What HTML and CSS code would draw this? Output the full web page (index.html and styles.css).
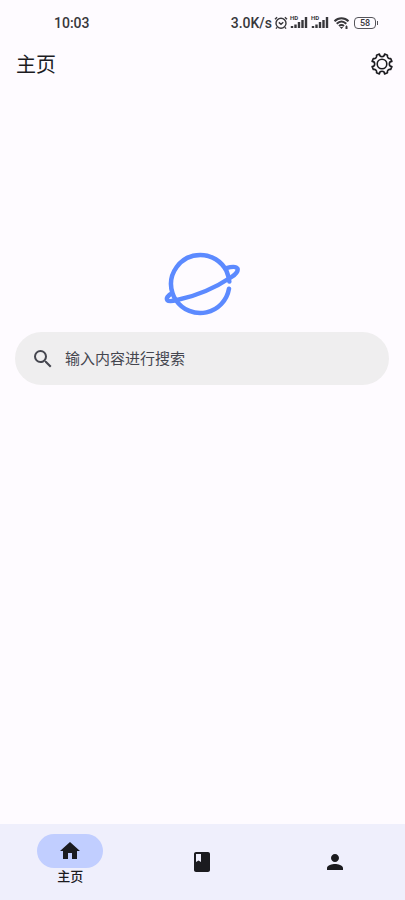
FILE: index.html
```html
<!DOCTYPE html>
<html lang="zh-CN">
<head>
<meta charset="utf-8">
<meta name="viewport" content="width=device-width, initial-scale=1">
<title>主页</title>
<link rel="stylesheet" href="styles.css">
</head>
<body>
<div class="status">
  <time class="clock">10:03</time>
  <div class="indicators">
    <span class="speed">3.0K/s</span>
    <svg class="alarm" width="14" height="14" viewBox="0 0 14 14"><circle cx="7" cy="7.3" r="5"/><path d="M4.800 6.400 7 8.300l2.300-2M1 3.200l2.100-2M13 3.200l-2.100-2M3 11.400l-1 1.200M11 11.400l1 1.200"/></svg>
    <span class="signal"><span class="hd">HD</span><svg width="18" height="13" viewBox="0 0 18 13"><path d="M2 12v-2M5.500 12V8.500M9 12V6M12.500 12V4M16 12V1"/></svg></span>
    <span class="signal"><span class="hd">HD</span><svg width="18" height="13" viewBox="0 0 18 13"><path d="M2 12v-2M5.500 12V8.500M9 12V6M12.500 12V4M16 12V1"/></svg></span>
    <svg class="wifi" width="17" height="14" viewBox="0 0 17 14"><path d="M1.500 5.200C5.500 1.200 11.500 1.200 15.500 5.200M3.700 7.700c3-2.800 6.600-2.800 9.600 0M6 10.100c1.600-1.400 3.400-1.400 5 0"/><path class="solid" d="m8.500 13 1.700-2.100H6.800zM12.500 10.500l1-1.200 1 1.200v2.500h-2z"/></svg>
    <span class="battery">58</span>
  </div>
</div>
<header class="topbar">
  <h1>主页</h1>
  <button class="settings" type="button" aria-label="设置">
    <svg width="24" height="24" viewBox="0 0 24 24"><path d="M21.900 14.600 20.700 17.500A2.500 2.500 0 0 0 17.500 20.700L14.600 21.900A2.500 2.500 0 0 0 9.400 21.900L6.500 20.700A2.500 2.500 0 0 0 3.300 17.500L2.100 14.600A2.500 2.500 0 0 0 2.100 9.400L3.300 6.500A2.500 2.500 0 0 0 6.500 3.300L9.400 2.100A2.500 2.500 0 0 0 14.600 2.100L17.500 3.300A2.500 2.500 0 0 0 20.700 6.500L21.900 9.400A2.500 2.500 0 0 0 21.900 14.600Z"/><circle cx="12" cy="12" r="4.800"/></svg>
  </button>
</header>
<main>
  <svg class="logo" width="76" height="66" viewBox="9 11 76 66" aria-hidden="true">
    <path d="M74 48.700A29.200 29.200 0 0 1 21 60.200C19.200 57.800 18.200 55.500 17.500 53.200A29.300 29.300 0 0 1 45.300 14.900A29.300 29.300 0 0 1 71.500 31Q73.500 35.500 74.300 41.500"/>
    <path d="M17 53.400C12.500 55.500 11 58.500 12.500 60.300C14 61.700 19 60.700 22 60C41 56.200 60 48 76.500 37C81 34 83.200 31 82.500 28.700C81 26 76 26.800 71.300 28.200"/>
  </svg>
  <label class="search">
    <svg width="24" height="24" viewBox="0 0 24 24" aria-hidden="true"><path d="M15.500 14h-.79l-.28-.27A6.471 6.471 0 0 0 16 9.500 6.500 6.500 0 1 0 9.500 16c1.610 0 3.090-.59 4.230-1.570l.27.28v.79l5 4.990L20.490 19zm-6 0C7.010 14 5 11.990 5 9.500S7.010 5 9.500 5 14 7.010 14 9.500 11.990 14 9.500 14"/></svg>
    <input type="search" placeholder="输入内容进行搜索" aria-label="输入内容进行搜索">
  </label>
</main>
<nav>
  <a class="tab active" href="#home"><span class="pill"><svg width="24" height="24" viewBox="0 0 24 24"><path d="M10 20v-6h4v6h5v-8h3L12 3 2 12h3v8z"/></svg></span><span>主页</span></a>
  <a class="tab" href="#library" aria-label="书库"><svg width="24" height="24" viewBox="0 0 24 24"><path d="M18 2H6c-1.100 0-2 .9-2 2v16c0 1.100.9 2 2 2h12c1.100 0 2-.9 2-2V4c0-1.100-.9-2-2-2M6 4h5v8l-2.500-1.500L6 12z"/></svg></a>
  <a class="tab" href="#me" aria-label="我的"><svg width="24" height="24" viewBox="0 0 24 24"><path d="M12 12c2.210 0 4-1.790 4-4s-1.790-4-4-4-4 1.790-4 4 1.790 4 4 4m0 2c-2.670 0-8 1.340-8 4v2h16v-2c0-2.660-5.330-4-8-4"/></svg></a>
</nav>
</body>
</html>
```
FILE: styles.css
```css
* { box-sizing: border-box; }
body {
  margin: 0;
  min-height: 100vh;
  display: flex;
  flex-direction: column;
  background: #fefbff;
  color: #1b1b1f;
  font-family: Roboto, "Noto Sans CJK SC", sans-serif;
}
svg { display: block; flex: none; }
.status {
  display: flex;
  align-items: center;
  justify-content: space-between;
  height: 44px;
  padding: 1px 29px 0 54px;
  color: #38373b;
  font-size: 14px;
  font-weight: 500;
}
.indicators { display: flex; align-items: center; gap: 2px; }
.alarm, .signal svg, .wifi { fill: none; stroke: #38373b; stroke-width: 1.4; }
.signal svg { stroke-width: 2.4; }
.wifi { stroke-width: 2; margin: 0 2px 0 1px; }
.wifi .solid { fill: #38373b; stroke: none; }
.signal { position: relative; width: 19px; }
.hd { position: absolute; left: 0; top: -1px; font-size: 6px; line-height: 6px; font-weight: 700; }
.battery {
  position: relative;
  width: 22px;
  height: 12px;
  border: 1px solid #55545a;
  border-radius: 4px;
  font-size: 9px;
  line-height: 10px;
  text-align: center;
}
.battery::after {
  content: "";
  position: absolute;
  right: -3px;
  top: 3px;
  width: 1px;
  height: 4px;
  background: #55545a;
}
.topbar {
  display: flex;
  align-items: center;
  justify-content: space-between;
  height: 40px;
  padding: 0 11px 0 16px;
}
h1 { margin: 0; padding-top: 2px; font-size: 20px; line-height: 28px; font-weight: 400; }
.settings { padding: 0; border: 0; background: none; }
.settings svg { fill: none; stroke: #1b1b1f; stroke-width: 1.6; stroke-linejoin: round; }
main {
  flex: 1;
  display: flex;
  flex-direction: column;
  align-items: center;
  gap: 15px;
  padding: 167px 16px 0 15px;
}
.logo { fill: none; stroke: #5c8aff; stroke-width: 4.5; stroke-linecap: round; stroke-linejoin: round; }
.search {
  display: flex;
  align-items: center;
  gap: 10px;
  align-self: stretch;
  height: 53px;
  padding: 0 16px;
  border-radius: 27px;
  background: #efeeef;
}
.search svg { fill: #45464f; }
.search input {
  flex: 1;
  min-width: 0;
  padding: 0;
  border: 0;
  outline: 0;
  background: none;
  color: #45464f;
  font: inherit;
  font-size: 15px;
}
.search input::placeholder { color: #45464f; opacity: 1; }
nav { display: flex; height: 76px; padding: 0 4px; background: #efeffc; }
.tab {
  flex: 1;
  display: flex;
  flex-direction: column;
  align-items: center;
  justify-content: center;
  color: #1b1b1f;
  font-size: 13px;
  line-height: 18px;
  font-weight: 500;
  text-decoration: none;
}
.active { padding-bottom: 4px; }
.tab svg { fill: #1b1b1f; }
.pill {
  display: flex;
  align-items: center;
  justify-content: center;
  width: 66px;
  height: 34px;
  border-radius: 17px;
  background: #c1ceff;
}
```
